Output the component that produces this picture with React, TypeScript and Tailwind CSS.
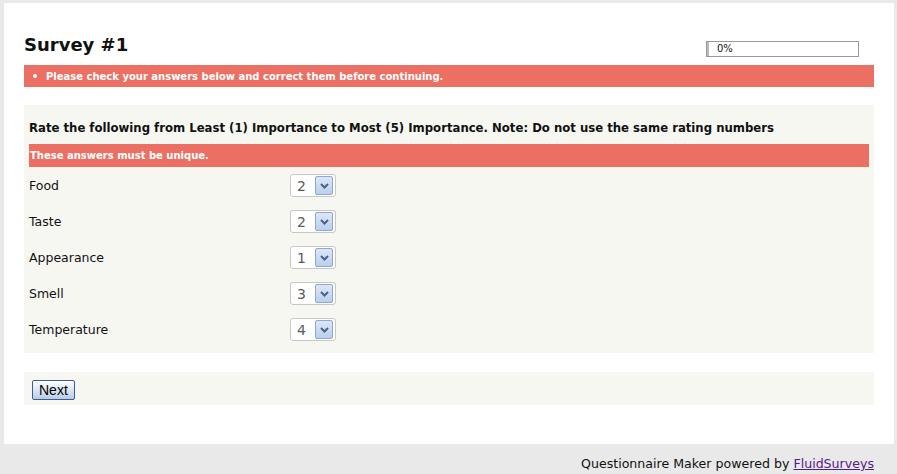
import React from "react";

const rows = [
  { label: "Food", value: "2" },
  { label: "Taste", value: "2" },
  { label: "Appearance", value: "1" },
  { label: "Smell", value: "3" },
  { label: "Temperature", value: "4" },
];

function Select({ value }: { value: string }) {
  return (
    <div className="flex items-center w-[46px] h-[23px] bg-white border border-[#c8c8c8] rounded-[3px] pl-[6px] pr-[2px] justify-between">
      <span className="text-[14px] text-[#5a5a5a] leading-none">{value}</span>
      <div className="w-[18px] h-[19px] border border-[#8fa8cf] rounded-[2px] bg-gradient-to-b from-[#dde8f6] to-[#b9cfee] flex items-center justify-center">
        <svg width="9" height="6" viewBox="0 0 9 6">
          <path d="M1 1 L4.5 4.5 L8 1" stroke="#4d6185" strokeWidth="2" fill="none" />
        </svg>
      </div>
    </div>
  );
}

export default function App() {
  return (
    <div
      className="min-h-[474px] bg-[#e9e9e9] pt-[3px] pl-[4px] pr-[3px]"
      style={{ fontFamily: '"DejaVu Sans", Verdana, sans-serif' }}
    >
      <div className="bg-white h-[441px] px-[20px] pt-[31px]">
        <div className="flex justify-between items-start">
          <h1 className="text-[18px] font-bold text-[#111] leading-[22px]">Survey #1</h1>
          <div className="mt-[7px] mr-[15px] w-[153px] h-[16px] border border-[#999] flex items-center">
            <div className="w-[2px] h-full bg-[#bbb]" />
            <span className="text-[10px] text-[#111] ml-[8px] leading-none">0%</span>
          </div>
        </div>
        <div className="mt-[8px] h-[22px] bg-[#eb7063] flex items-center pl-[9px]">
          <span className="w-[4px] h-[4px] rounded-full bg-white" />
          <span className="ml-[9px] text-white font-bold text-[10px]">
            Please check your answers below and correct them before continuing.
          </span>
        </div>
        <div className="mt-[18px] bg-[#f7f7f2] px-[5px] pt-[15px] pb-[12px]">
          <div className="text-[11.7px] font-bold text-[#111] leading-[16px]">
            Rate the following from Least (1) Importance to Most (5) Importance. Note: Do not use the same rating numbers
          </div>
          <div className="mt-[8px] h-[23px] bg-[#eb7063] flex items-center pl-[1px]">
            <span className="text-white font-bold text-[10px]">These answers must be unique.</span>
          </div>
          <div className="mt-[7px] flex flex-col gap-[13px]">
            {rows.map((r) => (
              <div key={r.label} className="flex items-center h-[23px]">
                <div className="w-[261px] text-[12.5px] text-[#111] leading-none pt-[1px]">{r.label}</div>
                <Select value={r.value} />
              </div>
            ))}
          </div>
        </div>
        <div className="mt-[19px] bg-[#f7f7f2] h-[33px] pl-[8px] pt-[6px]">
          <button className="h-[20px] px-[6px] border border-[#3b5d94] rounded-[2px] bg-gradient-to-b from-[#ffffff] to-[#b9cbe6] text-[14px] leading-none text-black" style={{ fontFamily: '"Liberation Sans", Arial, sans-serif' }}>
            Next
          </button>
        </div>
      </div>
      <div className="flex justify-end pr-[20px] pt-[11px]">
        <span className="text-[12.6px] text-[#111]">
          Questionnaire Maker powered by{" "}
          <a href="#" className="text-[#551a8b] underline">FluidSurveys</a>
        </span>
      </div>
    </div>
  );
}
